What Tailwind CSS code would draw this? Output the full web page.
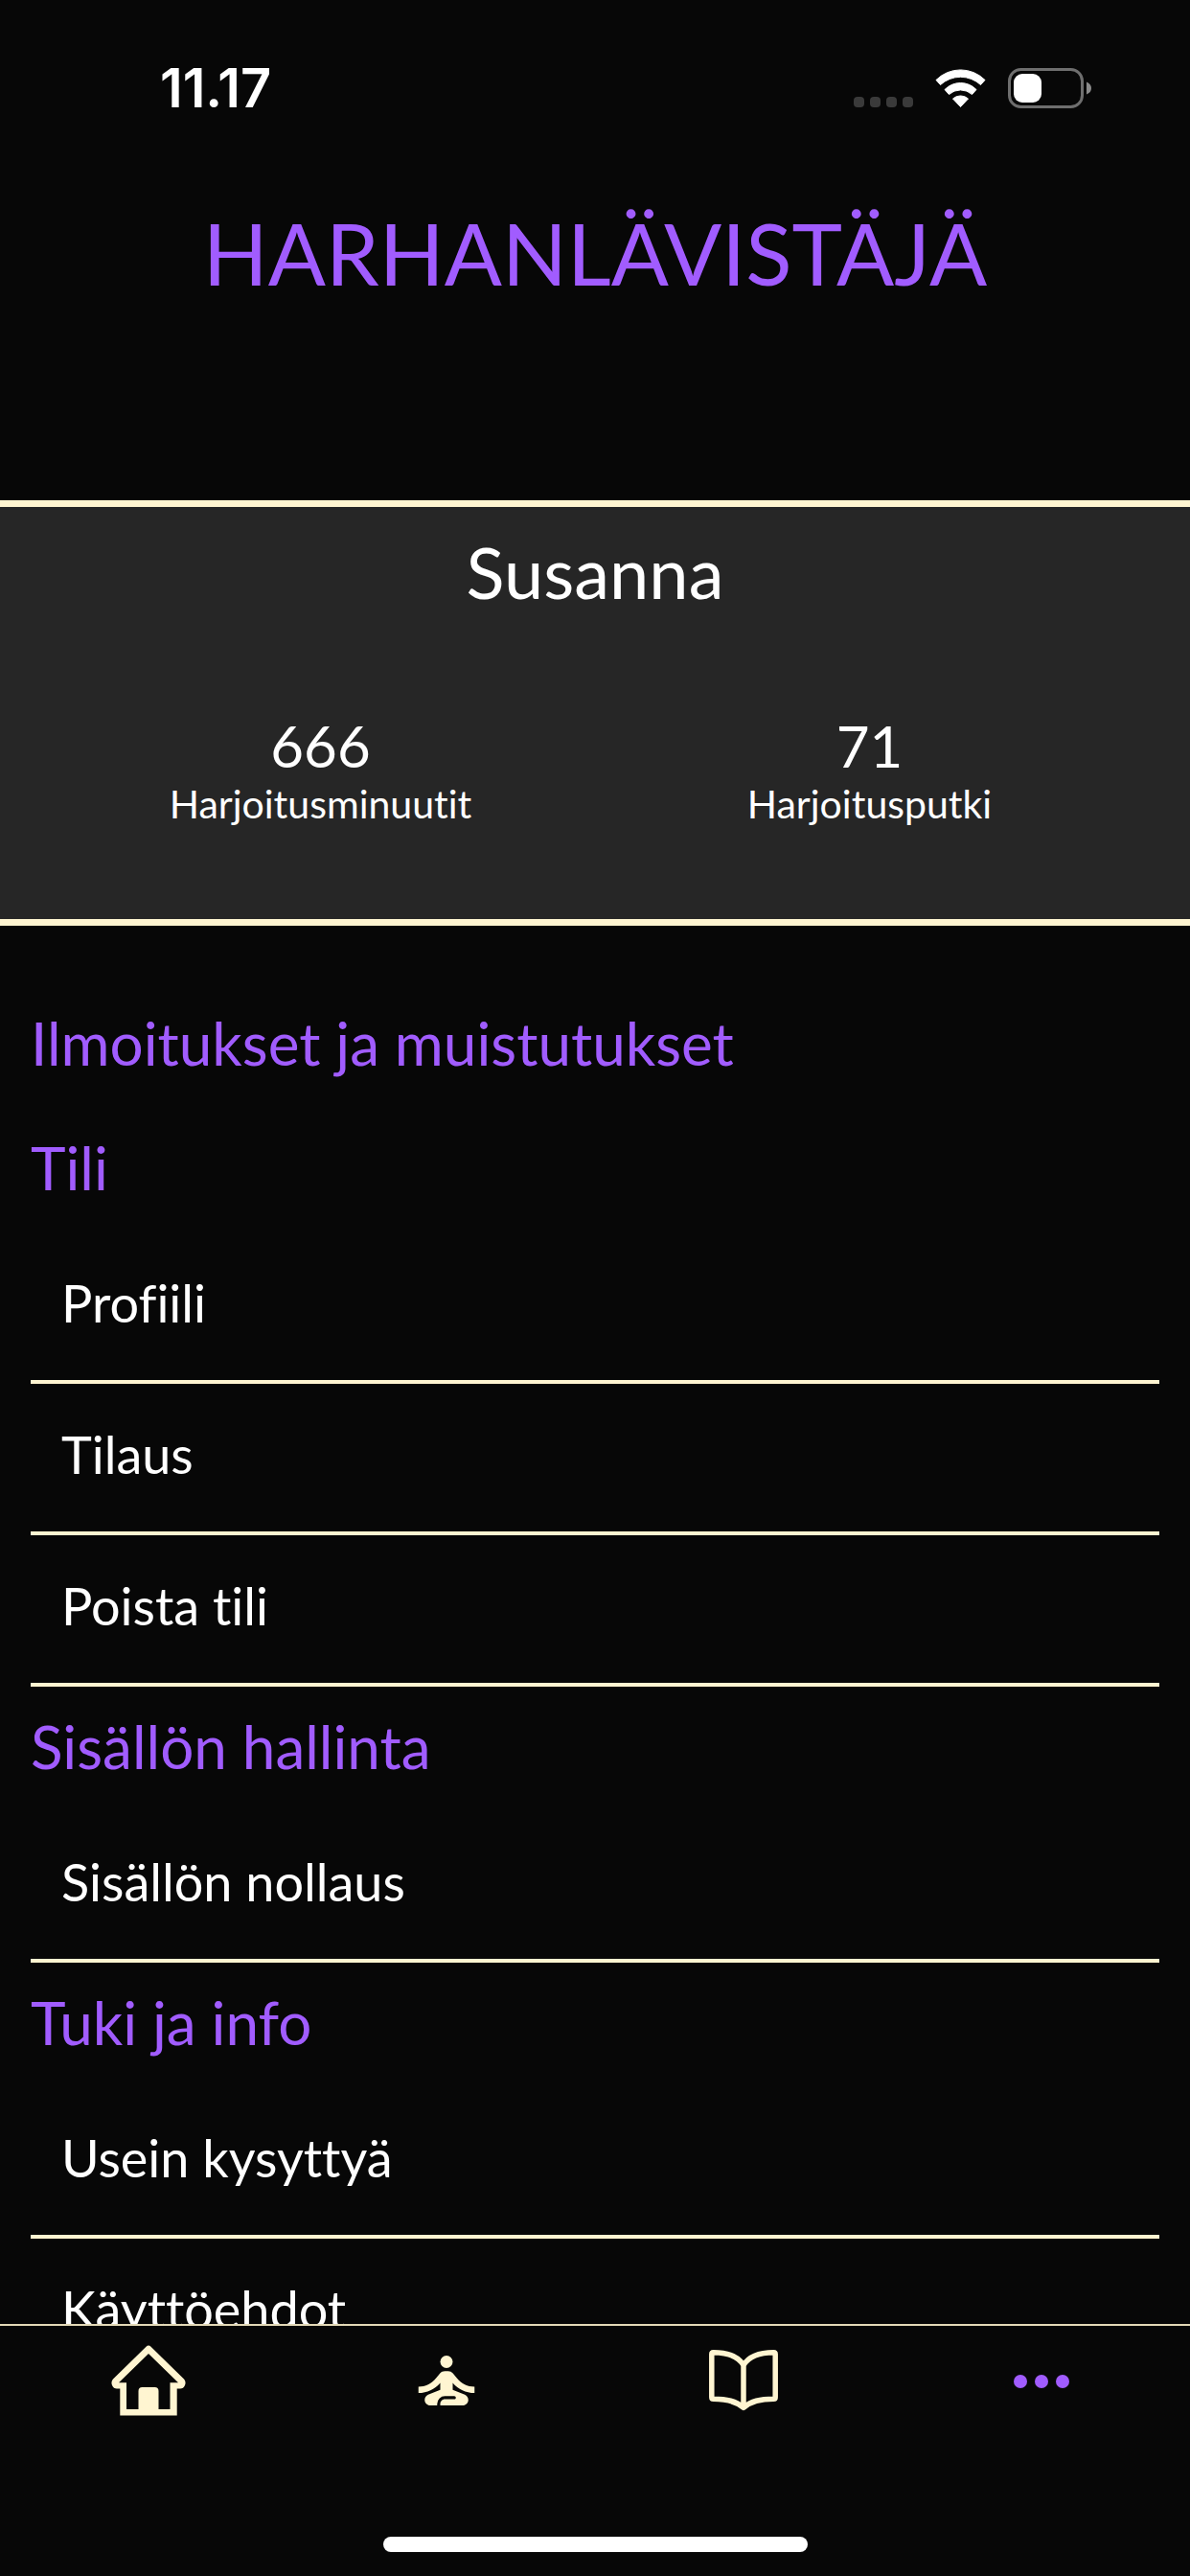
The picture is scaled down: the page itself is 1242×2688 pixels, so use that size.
<!DOCTYPE html>
<html lang="fi">
<head>
    <meta charset="UTF-8">
    <meta name="viewport" content="width=device-width, initial-scale=1.0">
    <title>Harhanlävistäjä</title>
    <script src="https://cdn.jsdelivr.net/npm/@tailwindcss/browser@4"></script>
</head>
<body class="h-screen flex flex-col overflow-hidden bg-[#070707] text-white font-['Lato',sans-serif] [font-variant-ligatures:none]">
    <!-- Status bar -->
    <div class="flex items-center justify-between pt-15 pl-[167px] pr-[103px] font-['Inter',sans-serif]">
        <span class="text-[56px] leading-16 font-semibold">11.17</span>
        <div class="flex items-center gap-[23px]">
            <div class="flex gap-1.5 pt-[29px]">
                <span class="size-[11px] rounded bg-[#3a3a3a]"></span>
                <span class="size-[11px] rounded bg-[#3a3a3a]"></span>
                <span class="size-[11px] rounded bg-[#3a3a3a]"></span>
                <span class="size-[11px] rounded bg-[#3a3a3a]"></span>
            </div>
            <svg class="w-[53px] h-10" viewBox="0 0 53 40" fill="white" stroke="white" stroke-linejoin="round">
                <path d="M1 11.500A36 36 0 0 1 52 11.500L47.500 16.500A31 31 0 0 0 5.500 16.500Z"/>
                <path d="M10 21.500A23 23 0 0 1 43 21.500L38.500 26.500A18 18 0 0 0 14.500 26.500Z"/>
                <path d="M18.500 31A12 12 0 0 1 34.500 31L26.500 39.500Z"/>
            </svg>
            <svg class="w-[87px] h-[42px]" viewBox="0 0 87 42">
                <rect x="1.500" y="1.500" width="76" height="39" rx="12" fill="none" stroke="#6e6e6e" stroke-width="3"/>
                <rect x="6" y="6" width="29" height="30" rx="9" fill="white"/>
                <path d="M82 14.500Q87 16.500 87 21T82 27.500Z" fill="#8a8a8a"/>
            </svg>
        </div>
    </div>

    <header class="pt-[92px] pb-[210px] text-center">
        <h1 class="text-[89px] leading-24 text-[#a15cff]">HARHANLÄVISTÄJÄ</h1>
    </header>

    <!-- Profile -->
    <section class="border-y-[7px] border-[#fff5d1] bg-neutral-800 pt-7 pb-[92px] text-center">
        <h2 class="text-[74px] leading-20">Susanna</h2>
        <dl class="grid grid-cols-2 px-12 pt-[108px]">
            <div class="flex flex-col-reverse">
                <dt class="text-[41px] leading-14">Harjoitusminuutit</dt>
                <dd class="text-[60px] leading-[66px]">666</dd>
            </div>
            <div class="flex flex-col-reverse">
                <dt class="text-[41px] leading-14">Harjoitusputki</dt>
                <dd class="text-[60px] leading-[66px]">71</dd>
            </div>
        </dl>
    </section>

    <!-- Settings -->
    <main class="flex-1 min-h-0 overflow-y-auto [scrollbar-width:none] px-8 pt-15 text-[54px] leading-16">
        <h2 class="pt-[30px] pb-9 text-[62px] text-[#a15cff]"><a href="#">Ilmoitukset ja muistutukset</a></h2>
        <h2 class="pt-[30px] pb-9 text-[62px] text-[#a15cff]">Tili</h2>
        <a href="#" class="block border-b-4 border-[#fff5d1] px-8 pt-[42px] pb-12">Profiili</a>
        <a href="#" class="block border-b-4 border-[#fff5d1] px-8 pt-[42px] pb-12">Tilaus</a>
        <a href="#" class="block border-b-4 border-[#fff5d1] px-8 pt-[42px] pb-12">Poista tili</a>
        <h2 class="pt-[30px] pb-9 text-[62px] text-[#a15cff]">Sisällön hallinta</h2>
        <a href="#" class="block border-b-4 border-[#fff5d1] px-8 pt-[42px] pb-12">Sisällön nollaus</a>
        <h2 class="pt-[30px] pb-9 text-[62px] text-[#a15cff]">Tuki ja info</h2>
        <a href="#" class="block border-b-4 border-[#fff5d1] px-8 pt-[42px] pb-12">Usein kysyttyä</a>
        <a href="#" class="block border-b-4 border-[#fff5d1] px-8 pt-[42px] pb-12">Käyttöehdot</a>
    </main>

    <!-- Tab bar -->
    <footer class="flex flex-col items-center border-t-2 border-[#e3d9b6] pt-3 pb-[25px]">
        <nav class="grid grid-cols-4 w-full text-[#fff5d1]">
            <a href="#" aria-label="Koti" class="flex h-[90px] items-center justify-center">
                <svg class="size-[90px]" viewBox="0 0 90 90" fill="currentColor" fill-rule="evenodd">
                    <path d="M42.500 9.700Q45 7.300 47.500 9.700L82 43.500Q84.500 46.500 83 50Q81.500 53.500 78 53.500H74.700V81.500H15.300V53.500H12Q8.500 53.500 7 50Q5.500 46.500 8 43.500ZM45 17L14 47.200H22V75H34.500V56Q34.500 52 38.500 52H51.500Q55.500 52 55.500 56V75H67.500V47.200H76Z"/>
                </svg>
            </a>
            <a href="#" aria-label="Harjoitukset" class="flex h-[90px] items-center justify-center">
                <svg class="size-[78px]" viewBox="0 0 24 24" fill="currentColor">
                    <circle cx="12" cy="6" r="2"/>
                    <path d="M21 16v-2c-2.240 0-4.160-.960-5.600-2.680l-1.340-1.600A1.980 1.980 0 0 0 12.530 9h-1.050c-.610 0-1.170.260-1.550.720l-1.340 1.600C7.160 13.040 5.240 14 3 14v2c2.770 0 5.190-1.170 7-3.250V15l-3.880 1.550C5.450 16.820 5 17.480 5 18.210 5 19.200 5.800 20 6.790 20H9v-.5a2.500 2.500 0 0 1 2.500-2.500h3c.280 0 .5.220.5.5s-.220.5-.5.5h-3c-.830 0-1.500.670-1.500 1.500v.5h7.210c.990 0 1.790-.8 1.790-1.790 0-.730-.450-1.390-1.120-1.660L14 15v-2.250C15.810 14.830 18.230 16 21 16z"/>
                </svg>
            </a>
            <a href="#" aria-label="Kirjasto" class="flex h-[90px] items-center justify-center">
                <svg class="size-[90px]" viewBox="0 0 90 90" fill="none" stroke="currentColor" stroke-width="5.500" stroke-linejoin="round" stroke-linecap="round">
                    <path d="M45 29C39 19 27 15.700 13.500 15.700Q11.800 15.700 11.800 17.500V62.500Q11.800 64.300 13.500 64.300C28 64.300 37 66.500 45 73.300C53 66.500 62 64.300 76.500 64.300Q78.200 64.300 78.200 62.500V17.500Q78.200 15.700 76.500 15.700C63 15.700 51 19 45 29ZV73"/>
                </svg>
            </a>
            <a href="#" aria-label="Lisää" aria-current="page" class="flex h-[90px] items-center justify-center text-[#a15cff]">
                <svg class="size-[88px]" viewBox="0 0 88 88" fill="currentColor">
                    <circle cx="22" cy="45" r="7"/>
                    <circle cx="44" cy="45" r="7"/>
                    <circle cx="66" cy="45" r="7"/>
                </svg>
            </a>
        </nav>
        <div class="mt-[118px] h-4 w-[443px] rounded-full bg-white"></div>
    </footer>
</body>
</html>
